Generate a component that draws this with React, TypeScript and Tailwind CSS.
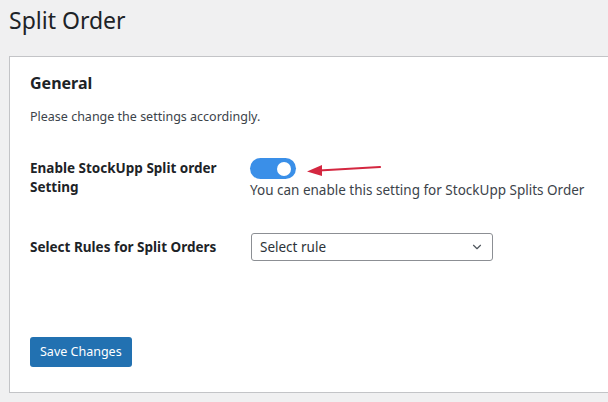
import { ChevronDown } from "lucide-react";

export default function App() {
  return (
    <div
      className="w-[608px] h-[402px] overflow-hidden bg-[#f0f0f1] pl-[9px] text-[#1d2327]"
      style={{ fontFamily: '"Noto Sans", "Open Sans", sans-serif' }}
    >
      <h1 className="pt-[4px] text-[23px] leading-[32px] font-normal">Split Order</h1>

      {/* Settings card */}
      <div className="mt-[20px] h-[337px] border border-r-0 border-[#c3c4c7] bg-white pl-[20px]">
        <h2 className="pt-[15px] text-[16px] leading-[22px] font-bold">General</h2>
        <p className="mt-[14px] text-[12.5px] leading-[18px] text-[#3c434a]">
          Please change the settings accordingly.
        </p>

        <div className="mt-[32px] flex">
          <div className="w-[220px] shrink-0 pt-[1px] text-[13.5px] leading-[19px] font-bold">
            Enable StockUpp Split order
            <br />
            Setting
          </div>
          <div className="flex flex-col">
            <div className="flex items-center gap-[11px]">
              <button className="relative h-[21px] w-[46px] rounded-full bg-[#3a8fe8]">
                <span className="absolute right-[5px] top-[3.5px] h-[14px] w-[14px] rounded-full bg-white" />
              </button>
              <svg width="76" height="14" viewBox="0 0 76 14">
                <line x1="12" y1="8.5" x2="73" y2="5" stroke="#d42740" strokeWidth="2.2" strokeLinecap="round" />
                <polygon points="0,9.5 15,3 15,14" fill="#d42740" />
              </svg>
            </div>
            <span className="mt-[2px] text-[13.5px] leading-[19px] text-[#3c434a]">
              You can enable this setting for StockUpp Splits Order
            </span>
          </div>
        </div>

        <div className="mt-[33px] flex items-center">
          <div className="w-[221px] shrink-0 text-[13.5px] leading-[19px] font-bold">
            Select Rules for Split Orders
          </div>
          <div className="flex h-[28px] w-[242px] items-center justify-between rounded-[3px] border border-[#8c8f94] pl-[8px] pr-[8px] text-[13.5px] text-[#2c3338]">
            <span>Select rule</span>
            <ChevronDown size={14} strokeWidth={2} className="text-[#50575e]" />
          </div>
        </div>

        <button className="mt-[76px] h-[30px] rounded-[3px] bg-[#2271b1] px-[10px] text-[12.5px] text-white">
          Save Changes
        </button>
      </div>
    </div>
  );
}
